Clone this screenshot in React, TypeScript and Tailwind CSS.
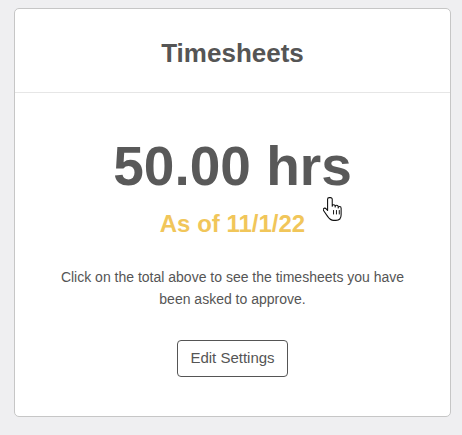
const HandCursor = () => (
  <svg
    width="20"
    height="26"
    viewBox="0 0 18 24"
    className="absolute left-[323px] top-[196px]"
  >
    <path
      d="M5.5 1.5c-.9 0-1.5.7-1.5 1.6v10.2l-1.3-1.5c-.7-.7-1.7-.8-2.3-.2-.5.5-.5 1.3 0 2l3.6 5.2c1.1 1.6 2.7 3.7 5.5 3.7h2.2c3 0 4.8-2.2 4.8-5.2v-6.1c0-.9-.6-1.5-1.4-1.5-.8 0-1.3.6-1.3 1.4v-1c0-.9-.6-1.5-1.4-1.5-.8 0-1.4.6-1.4 1.5v-.6c0-.9-.6-1.5-1.4-1.5-.8 0-1.3.6-1.3 1.4V3.1c0-.9-.7-1.6-1.6-1.6z"
      fill="#fff"
      stroke="#111"
      strokeWidth="1"
      strokeLinejoin="round"
    />
    <path d="M9.5 13v4M12.2 13v4M14.8 13v4" stroke="#111" strokeWidth="0.9" />
  </svg>
);

const App = () => {
  return (
    <div
      className="relative min-h-screen bg-[#efeff1] pt-2 pl-[14px]"
      style={{ fontFamily: '"Liberation Sans", Arial, sans-serif' }}
    >
      <div className="w-[437px] rounded-[5px] border border-[#c6c6c6] bg-white">
        <div className="border-b border-[#e6e6e6] pt-[29px] pb-[24px] text-center">
          <h2 className="text-[26px] leading-[30px] font-bold text-[#555555]">
            Timesheets
          </h2>
        </div>

        <div className="flex flex-col items-center px-6 pt-[46px] pb-[39px] text-center">
          <p className="cursor-pointer text-[55px] leading-none font-bold text-[#595959]">
            50.00 hrs
          </p>
          <p className="mt-[18px] text-[24px] leading-[24px] font-bold text-[#f1c65a]">
            As of 11/1/22
          </p>
          <p className="mt-[30px] text-[14px] leading-[22px] text-[#555555]">
            Click on the total above to see the timesheets you have
            <br />
            been asked to approve.
          </p>
          <button className="mt-[30px] h-[37px] w-[111px] rounded-[4px] border border-[#555555] bg-white text-[15px] text-[#555555]">
            Edit Settings
          </button>
        </div>
      </div>
      <HandCursor />
    </div>
  );
};

export default App;
